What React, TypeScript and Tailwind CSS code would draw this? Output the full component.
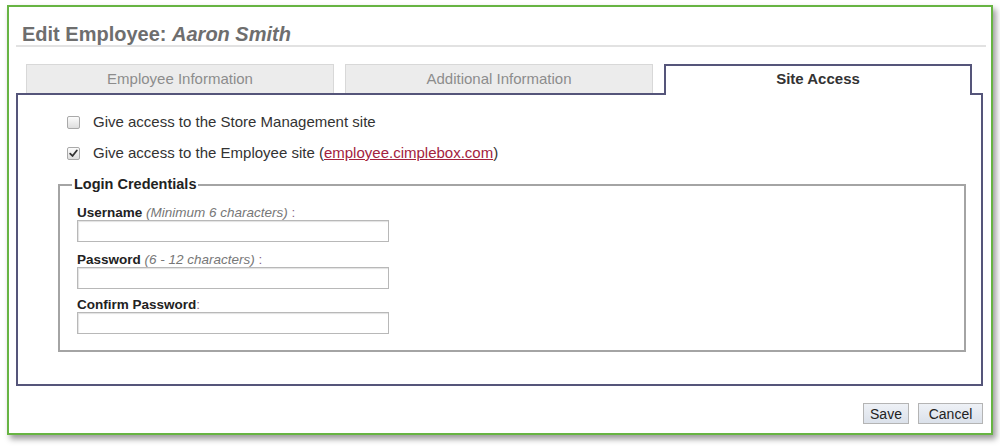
const font = { fontFamily: '"Liberation Sans", Arial, sans-serif' }

function Box({ checked }: { checked?: boolean }) {
  return (
    <span className="flex h-[13px] w-[13px] items-center justify-center rounded-[2px] border border-[#a9a9a9] bg-gradient-to-b from-[#fcfcfc] to-[#dedede]">
      {checked && (
        <svg width="9" height="9" viewBox="0 0 9 9">
          <path d="M1.2 4.6 L3.5 7 L7.8 1.5" fill="none" stroke="#333" strokeWidth="1.8" strokeLinecap="round" strokeLinejoin="round" />
        </svg>
      )}
    </span>
  )
}

function Field({ label, hint, gap }: { label: string; hint?: string; gap: string }) {
  return (
    <div className={gap}>
      <div className="pt-[2px] text-[13.5px] leading-[14px] text-[#222]">
        <span className="font-bold">{label}</span>
        {hint && <span className="italic text-[#777]"> {hint} </span>}
        <span className="text-[#8a6a8a]">:</span>
      </div>
      <div className="h-[22px] w-[312px] border border-[#b8b8b8] bg-white shadow-[inset_1px_1px_1px_rgba(0,0,0,0.12)]" />
    </div>
  )
}

export default function App() {
  const tabs = ['Employee Information', 'Additional Information']
  return (
    <div className="h-[447px] w-[1000px] overflow-hidden bg-white pl-[7px] pt-[5px]" style={font}>
      <div className="h-[430px] w-[986px] border-2 border-[#67b443] bg-white px-[7px] pt-[16px] shadow-[3px_4px_6px_rgba(0,0,0,0.4)]">
        <h1 className="w-[970px] border-b-2 border-[#e2e2e2] pl-[6px] text-[20px] font-bold leading-[22px] text-[#6e6e6e]">
          Edit Employee: <span className="italic">Aaron Smith</span>
        </h1>

        <div className="mt-[17px] flex items-end gap-[11px] pl-[10px]">
          {tabs.map((t) => (
            <div
              key={t}
              className="flex h-[29px] w-[308px] items-center justify-center border border-b-0 border-[#d8d8d8] bg-[#ececec] text-[15px] text-[#8c8c8c]"
            >
              {t}
            </div>
          ))}
          <div className="relative z-10 -mb-[2px] flex h-[31px] w-[308px] items-center justify-center border-2 border-b-0 border-[#55557a] bg-white pb-[2px] text-[15px] font-bold text-[#333]">
            Site Access
          </div>
        </div>

        <div className="h-[293px] w-[967px] border-2 border-[#55557a] pl-[49px] pr-[15px] pt-[17px]">
          <div className="flex h-[20px] items-center gap-[13px] text-[15px] text-[#333]">
            <Box />
            <span>Give access to the Store Management site</span>
          </div>
          <div className="mt-[11px] flex h-[20px] items-center gap-[13px] text-[15px] text-[#333]">
            <Box checked />
            <span>
              Give access to the Employee site (
              <a className="text-[#a3223e] underline" href="#">
                employee.cimplebox.com
              </a>
              )
            </span>
          </div>

          <fieldset className="-ml-[9px] mt-[13px] h-[176px] w-[908px] border-2 border-[#a4a4a4] pl-[12px]">
            <legend className="px-[2px] text-[14.5px] font-bold leading-[17px] text-[#222]">Login Credentials</legend>
            <div className="pl-[5px] pt-[11px]">
              <Field label="Username" hint="(Minimum 6 characters)" gap="" />
              <Field label="Password" hint="(6 - 12 characters)" gap="mt-[9px]" />
              <Field label="Confirm Password" gap="mt-[7px]" />
            </div>
          </fieldset>
        </div>

        <div className="mt-[17px] flex w-[967px] justify-end gap-[9px]">
          <button className="h-[21px] w-[46px] border border-[#b4b4b4] bg-gradient-to-b from-[#eef1f6] to-[#dbe1ea] text-[14px] leading-none text-[#222]">
            Save
          </button>
          <button className="h-[21px] w-[65px] border border-[#b4b4b4] bg-gradient-to-b from-[#eef1f6] to-[#dbe1ea] text-[14px] leading-none text-[#222]">
            Cancel
          </button>
        </div>
      </div>
    </div>
  )
}
